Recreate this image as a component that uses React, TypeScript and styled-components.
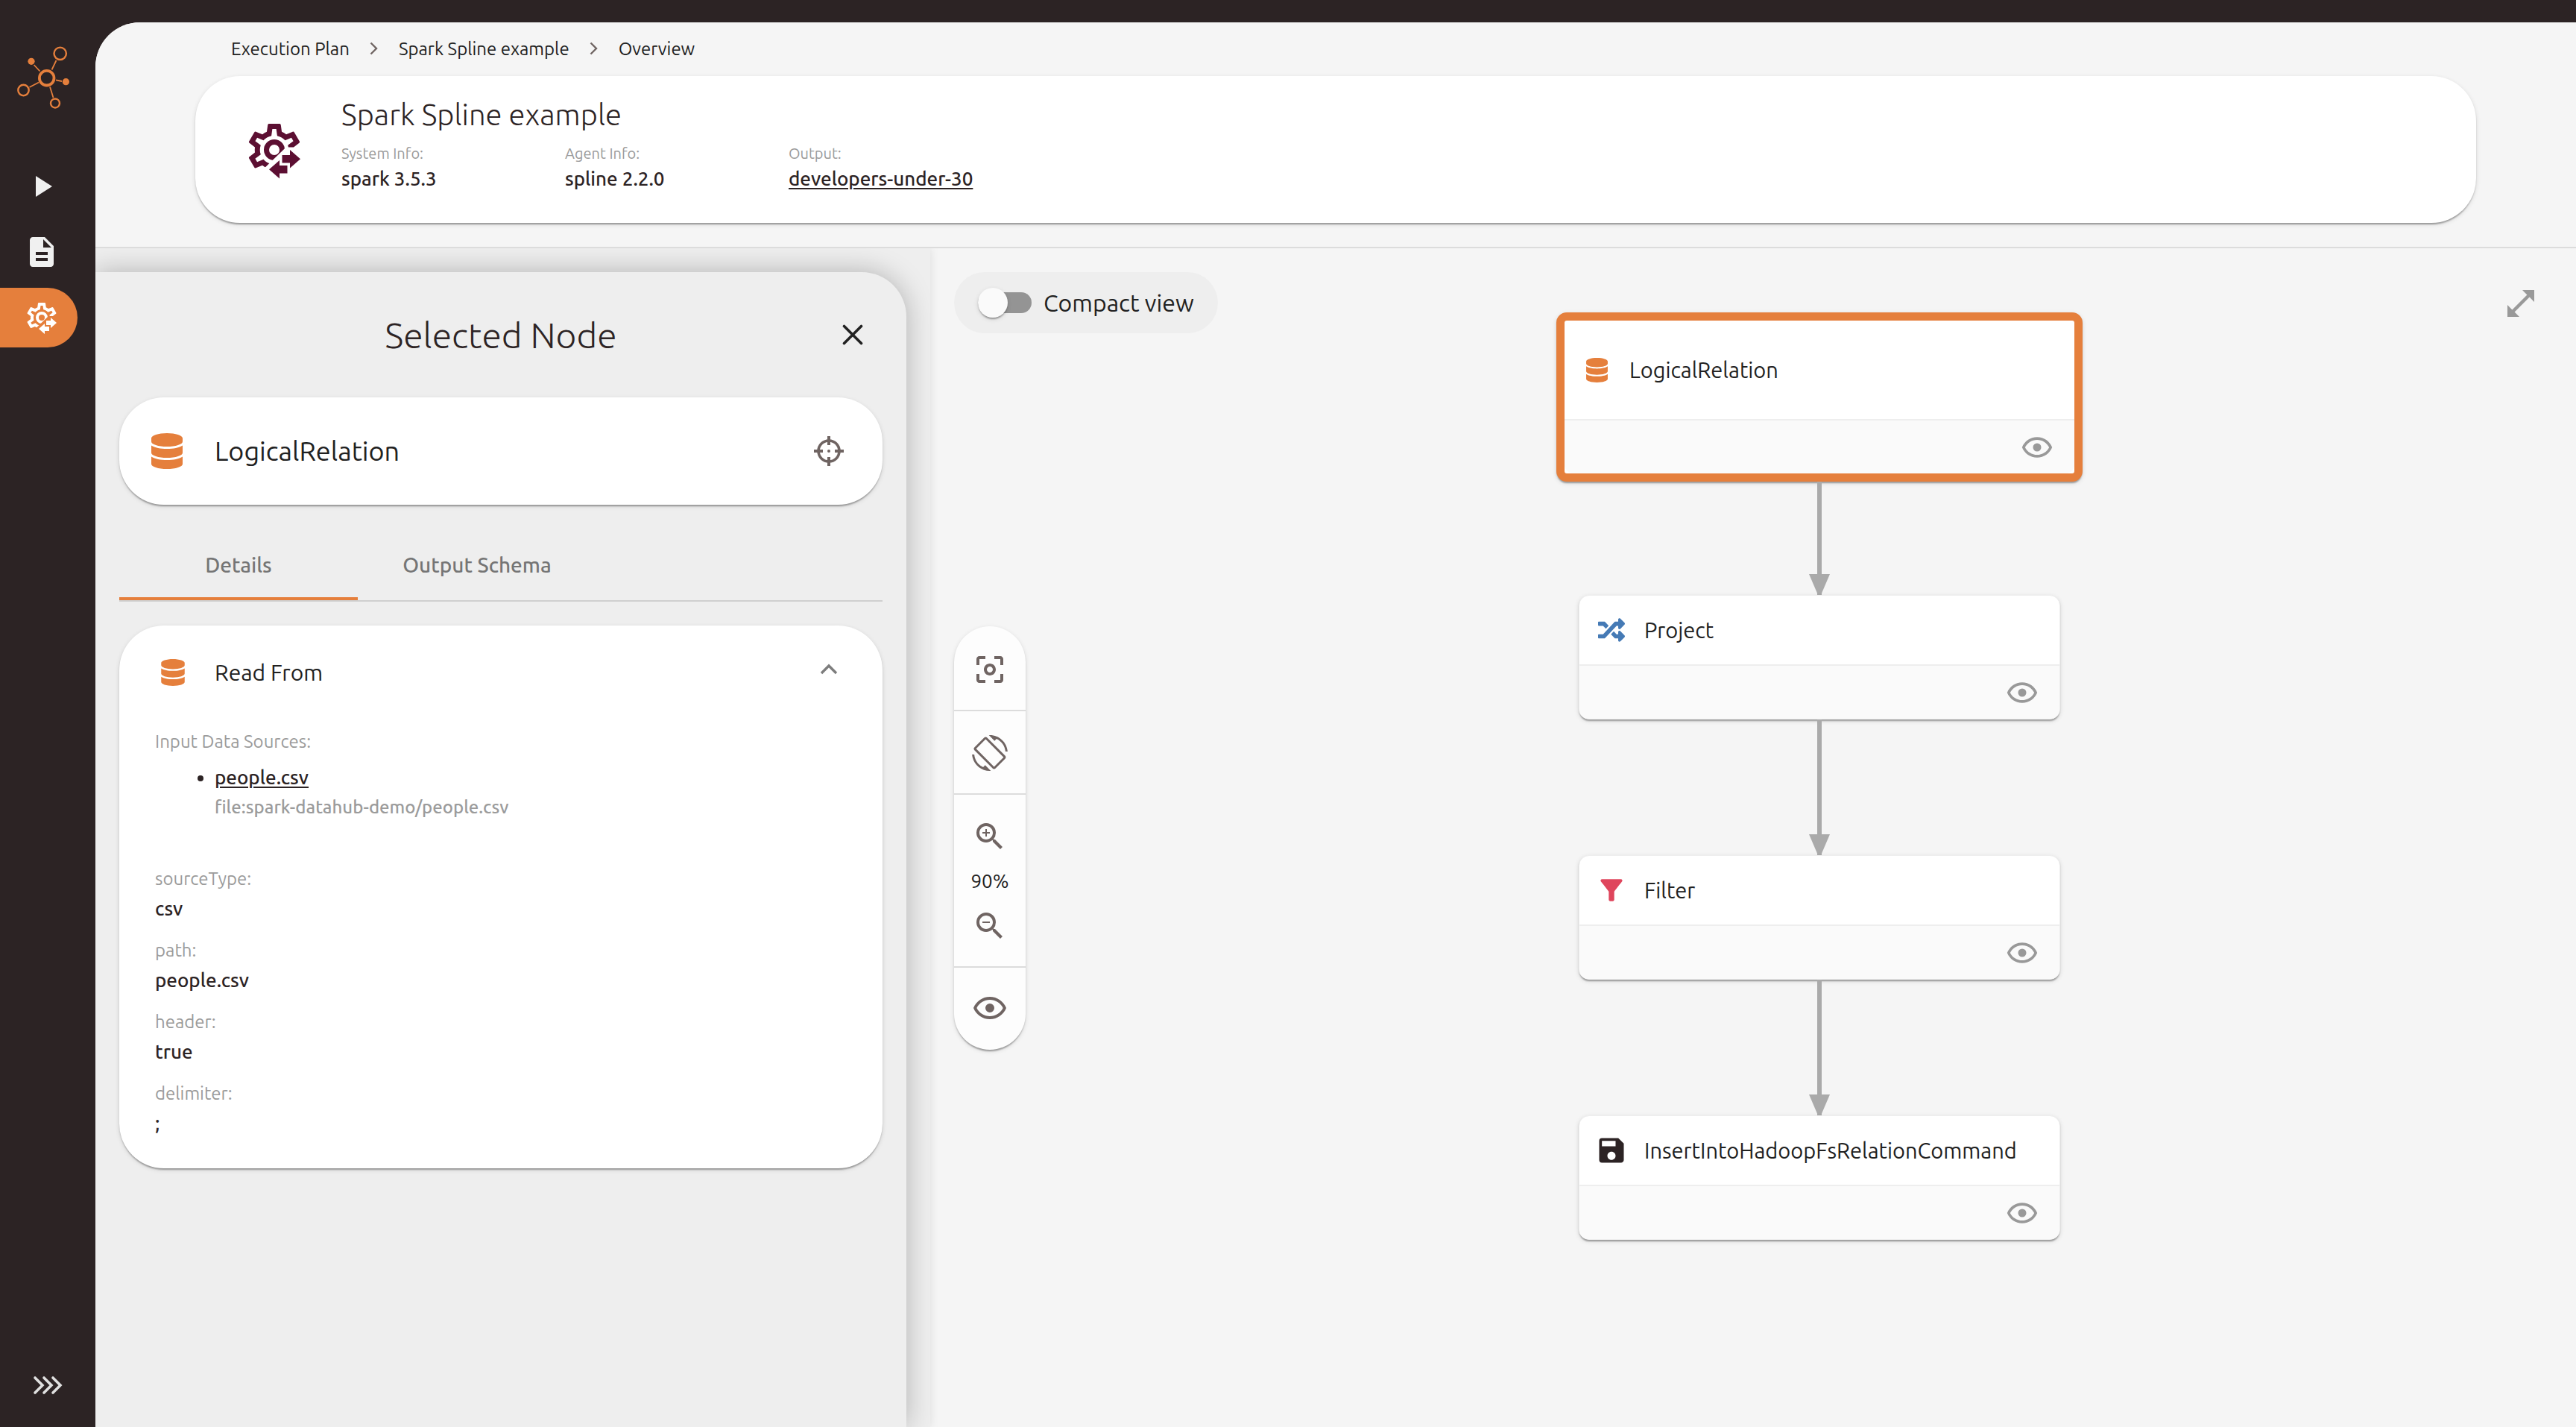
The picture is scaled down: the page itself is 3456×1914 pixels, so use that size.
import React from "react";
import styled, { createGlobalStyle } from "styled-components";
import { FaDatabase, FaRandom } from "react-icons/fa";
import {
  MdCenterFocusWeak,
  MdDescription,
  MdFilterAlt,
  MdPlayArrow,
  MdSave,
  MdScreenRotation,
  MdZoomIn,
  MdZoomOut,
} from "react-icons/md";

const color = {
  dark: "#2c2324",
  text: "#212121",
  muted: "#9b9b9b",
  brown: "#6f6462",
  orange: "#e57f3c",
  wine: "#5c0f32",
  blue: "#457ab5",
  red: "#df455c",
  canvas: "#f5f5f5",
  panel: "#eeeeee",
  line: "#dcdcdc",
  edge: "#aaaaaa",
};

const elevation =
  "0 4px 2px -2px rgba(0,0,0,.2), 0 2px 2px 0 rgba(0,0,0,.14), 0 2px 6px 0 rgba(0,0,0,.12)";

const GlobalStyle = createGlobalStyle`
  *, *::before, *::after { box-sizing: border-box; }
  body {
    margin: 0;
    background: ${color.dark};
    color: ${color.text};
    font-family: Ubuntu, "Noto Sans", sans-serif;
    font-size: 24px;
  }
  h1, h2, h3, p, ul, ol, dl, dd { margin: 0; padding: 0; }
  svg { display: block; flex: none; }
`;

/* ---------- icons ---------- */

const CogTransferIcon = ({ size }: { size: number }) => (
  <svg width={size} height={size} viewBox="0 0 24 24" fill="currentColor" aria-hidden="true">
    <defs>
      <clipPath id="cog-cut">
        <polygon points="0,0 24,0 24,11 16.5,11 8.2,19 6,24 0,24" />
      </clipPath>
    </defs>
    <path
      clipPath="url(#cog-cut)"
      d="M12,8A4,4 0 0,1 16,12A4,4 0 0,1 12,16A4,4 0 0,1 8,12A4,4 0 0,1 12,8M12,10A2,2 0 0,0 10,12A2,2 0 0,0 12,14A2,2 0 0,0 14,12A2,2 0 0,0 12,10M10,22C9.75,22 9.54,21.82 9.5,21.58L9.13,18.93C8.5,18.68 7.96,18.34 7.44,17.94L4.95,18.95C4.73,19.03 4.46,18.95 4.34,18.73L2.34,15.27C2.21,15.05 2.27,14.78 2.46,14.63L4.57,12.97L4.5,12L4.57,11L2.46,9.37C2.27,9.22 2.21,8.95 2.34,8.73L4.34,5.27C4.46,5.05 4.73,4.96 4.95,5.05L7.44,6.05C7.96,5.66 8.5,5.32 9.13,5.07L9.5,2.42C9.54,2.18 9.75,2 10,2H14C14.25,2 14.46,2.18 14.5,2.42L14.87,5.07C15.5,5.32 16.04,5.66 16.56,6.05L19.05,5.05C19.27,4.96 19.54,5.05 19.66,5.27L21.66,8.73C21.79,8.95 21.73,9.22 21.54,9.37L19.43,11L19.5,12L19.43,13L21.54,14.63C21.73,14.78 21.79,15.05 21.66,15.27L19.66,18.73C19.54,18.95 19.27,19.04 19.05,18.95L16.56,17.95C16.04,18.34 15.5,18.68 14.87,18.93L14.5,21.58C14.46,21.82 14.25,22 14,22H10M11.25,4L10.88,6.61C9.68,6.86 8.62,7.5 7.85,8.39L5.44,7.35L4.69,8.65L6.8,10.2C6.4,11.37 6.4,12.64 6.8,13.8L4.68,15.36L5.43,16.66L7.86,15.62C8.63,16.5 9.68,17.14 10.87,17.38L11.24,20H12.76L13.13,17.39C14.32,17.14 15.37,16.5 16.14,15.62L18.57,16.66L19.32,15.36L17.2,13.81C17.6,12.64 17.6,11.37 17.2,10.2L19.31,8.65L18.56,7.35L16.15,8.39C15.38,7.5 14.32,6.86 13.12,6.62L12.75,4H11.25Z"
    />
    <path d="M18,12L22,15.5L18,19V17H15V14H18V12ZM14,16L10,19.5L14,23V21H17V18H14V16Z" />
  </svg>
);

const EyeIcon = ({ size }: { size: number }) => (
  <svg width={size} height={size} viewBox="0 0 24 24" fill="currentColor" aria-hidden="true">
    <path d="M12,9A3,3 0 0,1 15,12A3,3 0 0,1 12,15A3,3 0 0,1 9,12A3,3 0 0,1 12,9M12,4.5C17,4.5 21.27,7.61 23,12C21.27,16.39 17,19.5 12,19.5C7,19.5 2.73,16.39 1,12C2.73,7.61 7,4.5 12,4.5M3.18,12C4.83,15.36 8.24,17.5 12,17.5C15.76,17.5 19.17,15.36 20.82,12C19.17,8.64 15.76,6.5 12,6.5C8.24,6.5 4.83,8.64 3.18,12Z" />
  </svg>
);

const LogoIcon = () => (
  <svg width="72" height="84" viewBox="0 0 72 84" fill="none" stroke={color.orange} aria-hidden="true">
    <circle cx="40.7" cy="42.7" r="9.8" strokeWidth="3.8" />
    <circle cx="58.7" cy="9.8" r="8.2" strokeWidth="2.4" />
    <circle cx="9.5" cy="59" r="7.2" strokeWidth="2.4" />
    <circle cx="52" cy="76.5" r="6" strokeWidth="2.4" />
    <g fill={color.orange} stroke="none">
      <circle cx="20" cy="20.3" r="4.6" />
      <circle cx="66.4" cy="47.7" r="4.6" />
    </g>
    <path strokeWidth="1.8" d="M47.5 31.5 53.5 19M31.5 33.5 23.5 25M53 45.3 61 47M17.5 55 30 48.5M45 54.5 49.5 69" />
  </svg>
);

const ChevronRight = () => (
  <svg width="12" height="18" viewBox="0 0 12 18" fill="none" stroke={color.brown} strokeWidth="2.4" aria-hidden="true">
    <path d="M1.5 1.5 9 9 1.5 16.5" />
  </svg>
);

const TripleChevron = () => (
  <svg width="40" height="26" viewBox="0 0 40 26" fill="none" stroke="#e0e0e0" strokeWidth="3.6" strokeLinecap="round" aria-hidden="true">
    <path d="M3 3 13 13 3 23M15 3 25 13 15 23M27 3 37 13 27 23" />
  </svg>
);

const CloseIcon = () => (
  <svg width="28" height="28" viewBox="0 0 28 28" fill="none" stroke={color.text} strokeWidth="3.6" strokeLinecap="round" aria-hidden="true">
    <path d="M2.5 2.5 25.5 25.5M25.5 2.5 2.5 25.5" />
  </svg>
);

const TargetIcon = () => (
  <svg width="40" height="40" viewBox="0 0 40 40" fill="none" stroke={color.brown} strokeWidth="4" aria-hidden="true">
    <circle cx="20" cy="20" r="14" strokeWidth="3.6" />
    <path d="M20 0V12M20 28V40M0 20H12M28 20H40" />
    <circle cx="20" cy="20" r="2" fill={color.brown} stroke="none" />
  </svg>
);

const CollapseIcon = () => (
  <svg width="24" height="26" viewBox="0 0 24 26" fill="none" stroke="#7d7d7d" strokeWidth="3.4" aria-hidden="true">
    <path d="M2 14 12 4 22 14" />
  </svg>
);

const ExpandIcon = () => (
  <svg width="36" height="36" viewBox="0 0 36 36" fill="#999999" aria-hidden="true">
    <path d="M20 0H36V16L29.6 9.6 9.6 29.6 16 36H0V20L6.4 26.4 26.4 6.4Z" />
  </svg>
);

const EdgeArrow = ({ length }: { length: number }) => (
  <svg width="28" height={length} viewBox={`0 0 28 ${length}`} fill={color.edge} aria-hidden="true">
    <rect x="11" y="0" width="6" height={length} />
    <polygon points={`0,${length - 28} 28,${length - 28} 16,${length} 12,${length}`} />
  </svg>
);

/* ---------- shell ---------- */

const Shell = styled.div`
  display: flex;
  min-height: 100vh;
  padding-top: 30px;
  background: ${color.dark};
`;

const Sidebar = styled.nav`
  flex: 0 0 128px;
  display: flex;
  flex-direction: column;
  padding: 32px 0 24px;
`;

const LogoLink = styled.a`
  display: block;
  margin: 0 0 64px 22px;
`;

const NavList = styled.ul`
  display: flex;
  flex-direction: column;
  gap: 8px;
  list-style: none;
`;

const NavLink = styled.a<{ $active?: boolean }>`
  display: flex;
  align-items: center;
  width: 104px;
  height: 80px;
  padding-left: 32px;
  border-radius: 0 40px 40px 0;
  color: ${(p) => (p.$active ? "#ffffff" : "#f0f0f0")};
  background: ${(p) => (p.$active ? color.orange : "transparent")};
`;

const IconButton = styled.button<{ $size?: number; $tone?: string }>`
  display: flex;
  align-items: center;
  justify-content: center;
  width: ${(p) => p.$size ?? 48}px;
  height: ${(p) => p.$size ?? 48}px;
  padding: 0;
  border: 0;
  background: none;
  color: ${(p) => p.$tone ?? color.brown};
  cursor: pointer;
`;

const SidebarToggle = styled(IconButton)`
  width: 100%;
  margin-top: auto;
`;

const Content = styled.div`
  flex: 1;
  min-width: 0;
  display: flex;
  flex-direction: column;
  overflow: hidden;
  border-top-left-radius: 60px;
  background: ${color.canvas};
`;

/* ---------- header ---------- */

const Header = styled.header`
  position: relative;
  z-index: 1;
  padding: 0 134px 32px;
  border-bottom: 2px solid ${color.line};
  background: ${color.canvas};
`;

const Breadcrumbs = styled.ol`
  display: flex;
  align-items: center;
  height: 72px;
  padding: 0 48px 2px;
  list-style: none;
`;

const Crumb = styled.li`
  display: flex;
  align-items: center;
`;

const CrumbLink = styled.a`
  color: ${color.text};
  text-decoration: none;
`;

const CrumbSeparator = styled.span`
  display: flex;
  justify-content: center;
  width: 66px;
`;

const Card = styled.section`
  border-radius: 60px;
  background: #ffffff;
  box-shadow: ${elevation};
`;

const PlanCard = styled(Card)`
  display: flex;
  align-items: center;
  gap: 48px;
  padding: 0 64px;
  color: ${color.wine};
`;

const PlanInfo = styled.div`
  padding: 26px 0 39px;
  color: ${color.dark};
`;

const PlanTitle = styled.h1`
  margin-bottom: 12px;
  font-size: 40px;
  font-weight: 300;
  line-height: 52px;
`;

const Facts = styled.dl`
  display: flex;
`;

const Fact = styled.div`
  width: 300px;
`;

const FactLabel = styled.dt`
  font-size: 20px;
  line-height: 28px;
  color: ${color.muted};
`;

const FactValue = styled.dd`
  font-size: 26px;
  font-weight: 500;
  line-height: 40px;
`;

const StrongLink = styled.a`
  color: ${color.dark};
  text-decoration-thickness: 2px;
  text-underline-offset: 3px;
`;

/* ---------- selected node ---------- */

const Main = styled.main`
  position: relative;
  z-index: 0;
  flex: 1;
  display: flex;
`;

const SidePane = styled.aside`
  z-index: 0;
  flex: 0 0 1120px;
  display: flex;
  padding: 32px 32px 0 0;
  overflow: hidden;
  background: ${color.panel};
  box-shadow: 0 0 12px rgba(0, 0, 0, 0.1);
`;

const Drawer = styled.div`
  flex: 1;
  padding: 0 32px;
  border-top-right-radius: 60px;
  background: ${color.panel};
  box-shadow: 0 0 36px rgba(0, 0, 0, 0.26);
`;

const DrawerHeader = styled.div`
  display: grid;
  grid-template-columns: 80px 1fr 80px;
  align-items: center;
  height: 168px;
`;

const DrawerTitle = styled.h2`
  grid-column: 2;
  font-size: 48px;
  font-weight: 300;
  text-align: center;
  color: ${color.dark};
`;

const NodeCard = styled(Card)`
  display: flex;
  align-items: center;
  height: 144px;
  padding: 0 48px 0 40px;
  gap: 40px;
`;

const NodeName = styled.h3`
  flex: 1;
  font-size: 36px;
  font-weight: 400;
  line-height: 40px;
`;

const TabList = styled.div`
  display: flex;
  margin: 32px 0;
  border-bottom: 2px solid #cfcfcf;
`;

const Tab = styled.button<{ $active?: boolean }>`
  width: 320px;
  height: 96px;
  padding: 0;
  border: 0;
  background: none;
  box-shadow: ${(p) => (p.$active ? `inset 0 -4px ${color.orange}` : "none")};
  color: #757575;
  font: inherit;
  font-size: 28px;
  font-weight: 500;
  cursor: pointer;
`;

const SectionHeader = styled.div`
  display: flex;
  align-items: center;
  height: 126px;
  padding: 0 48px 0 54px;
  gap: 38px;
`;

const SectionTitle = styled.h3`
  flex: 1;
  font-size: 30px;
  font-weight: 400;
`;

const SectionBody = styled.div`
  padding: 10px 48px 40px;
  line-height: 40px;
`;

const PropLabel = styled.dt`
  color: ${color.muted};
`;

const PropValue = styled.dd`
  color: ${color.dark};
  font-size: 26px;
  font-weight: 500;
`;

const SourceList = styled.ul`
  margin: 8px 0 56px;
  padding-left: 80px;
  color: ${color.dark};
  font-size: 26px;
  font-weight: 500;
`;

const SourcePath = styled.p`
  color: ${color.muted};
  font-size: 24px;
`;

const Props = styled.dl`
  display: flex;
  flex-direction: column;
  gap: 16px;
`;

/* ---------- graph ---------- */

const GraphPane = styled.div`
  position: relative;
  z-index: -1;
  flex: 1;
  min-width: 0;
  padding: 86px 0 86px 178px;
`;

const Graph = styled.div`
  display: flex;
  flex-direction: column;
  align-items: center;
`;

const GraphNode = styled.article<{ $selected?: boolean }>`
  width: ${(p) => (p.$selected ? 706 : 646)}px;
  border: ${(p) => (p.$selected ? `11px solid ${color.orange}` : "1px solid #eeeeee")};
  border-radius: 14px;
  background: #ffffff;
  box-shadow: ${elevation};
`;

const GraphNodeHead = styled.div<{ $selected?: boolean }>`
  display: flex;
  align-items: center;
  gap: 22px;
  height: ${(p) => (p.$selected ? 132 : 92)}px;
  padding: 0 21px;
  font-size: 29px;
`;

const GraphNodeIcon = styled.span<{ $tone: string }>`
  display: flex;
  justify-content: center;
  width: 44px;
  color: ${(p) => p.$tone};
`;

const GraphNodeFoot = styled.div`
  display: flex;
  align-items: center;
  justify-content: flex-end;
  height: 73px;
  padding-right: 28px;
  border-top: 2px solid #eeeeee;
  border-radius: 0 0 12px 12px;
  background: #fafafa;
`;

const TopControls = styled.div`
  position: absolute;
  top: 32px;
  left: 32px;
  right: 32px;
  display: flex;
  justify-content: space-between;
`;

const CompactToggle = styled.label`
  display: flex;
  align-items: center;
  gap: 16px;
  height: 82px;
  padding: 0 32px;
  border-radius: 41px;
  background: ${color.panel};
  font-size: 32px;
`;

const Switch = styled.input`
  appearance: none;
  display: flex;
  align-items: center;
  width: 72px;
  height: 28px;
  margin: 0;
  border-radius: 14px;
  background: #949494;

  &::before {
    content: "";
    width: 40px;
    height: 40px;
    border-radius: 50%;
    background: #fafafa;
    box-shadow: ${elevation};
  }

  &:checked {
    justify-content: flex-end;
    background: ${color.orange};
  }
`;

const ToolDock = styled.div`
  position: absolute;
  top: 0;
  bottom: 0;
  left: 32px;
  display: flex;
  align-items: center;
`;

const Toolbar = styled.div`
  width: 96px;
  border-radius: 48px;
  background: #fdfdfd;
  box-shadow: ${elevation};
`;

const ToolGroup = styled.div`
  display: flex;
  flex-direction: column;
  align-items: center;
  justify-content: center;
  gap: 20px;
  padding: 32px 0 30px;
  font-size: 26px;
  line-height: 32px;

  & + & {
    border-top: 2px solid ${color.line};
  }

  &:first-child {
    padding-top: 34px;
  }

  &:last-child {
    padding: 30px 0 32px;
  }
`;

/* ---------- data ---------- */

type PlanNode = { name: string; tone: string; icon: React.ReactNode; edge?: number };

const planNodes: PlanNode[] = [
  { name: "LogicalRelation", tone: color.orange, icon: <FaDatabase size={33} />, edge: 152 },
  { name: "Project", tone: color.blue, icon: <FaRandom size={36} />, edge: 182 },
  { name: "Filter", tone: color.red, icon: <MdFilterAlt size={44} />, edge: 182 },
  { name: "InsertIntoHadoopFsRelationCommand", tone: color.dark, icon: <MdSave size={44} /> },
];

const properties = [
  ["sourceType", "csv"],
  ["path", "people.csv"],
  ["header", "true"],
  ["delimiter", ";"],
];

const crumbs = ["Execution Plan", "Spark Spline example", "Overview"];

/* ---------- page ---------- */

export default function App() {
  const [selected, setSelected] = React.useState("LogicalRelation");
  const [tab, setTab] = React.useState("Details");

  return (
    <Shell>
      <GlobalStyle />
      <Sidebar aria-label="Main">
        <LogoLink href="#" aria-label="Home">
          <LogoIcon />
        </LogoLink>
        <NavList>
          <li>
            <NavLink href="#events" aria-label="Execution events">
              <MdPlayArrow size={48} />
            </NavLink>
          </li>
          <li>
            <NavLink href="#sources" aria-label="Data sources">
              <MdDescription size={48} />
            </NavLink>
          </li>
          <li>
            <NavLink href="#plans" aria-label="Execution plans" $active>
              <CogTransferIcon size={48} />
            </NavLink>
          </li>
        </NavList>
        <SidebarToggle $size={64} aria-label="Expand menu">
          <TripleChevron />
        </SidebarToggle>
      </Sidebar>

      <Content>
        <Header>
          <Breadcrumbs>
            {crumbs.map((crumb, i) => (
              <Crumb key={crumb}>
                {i > 0 && (
                  <CrumbSeparator>
                    <ChevronRight />
                  </CrumbSeparator>
                )}
                <CrumbLink href="#">{crumb}</CrumbLink>
              </Crumb>
            ))}
          </Breadcrumbs>
          <PlanCard>
            <CogTransferIcon size={84} />
            <PlanInfo>
              <PlanTitle>Spark Spline example</PlanTitle>
              <Facts>
                <Fact>
                  <FactLabel>System Info:</FactLabel>
                  <FactValue>spark 3.5.3</FactValue>
                </Fact>
                <Fact>
                  <FactLabel>Agent Info:</FactLabel>
                  <FactValue>spline 2.2.0</FactValue>
                </Fact>
                <Fact>
                  <FactLabel>Output:</FactLabel>
                  <FactValue>
                    <StrongLink href="#output">developers-under-30</StrongLink>
                  </FactValue>
                </Fact>
              </Facts>
            </PlanInfo>
          </PlanCard>
        </Header>

        <Main>
          <SidePane>
            <Drawer>
              <DrawerHeader>
                <DrawerTitle>Selected Node</DrawerTitle>
                <IconButton $size={80} aria-label="Close">
                  <CloseIcon />
                </IconButton>
              </DrawerHeader>

              <NodeCard>
                <FaDatabase size={48} color={color.orange} />
                <NodeName>LogicalRelation</NodeName>
                <IconButton aria-label="Focus node">
                  <TargetIcon />
                </IconButton>
              </NodeCard>

              <TabList role="tablist">
                {["Details", "Output Schema"].map((name) => (
                  <Tab
                    key={name}
                    role="tab"
                    aria-selected={tab === name}
                    $active={tab === name}
                    onClick={() => setTab(name)}
                  >
                    {name}
                  </Tab>
                ))}
              </TabList>

              <Card>
                <SectionHeader>
                  <FaDatabase size={36} color={color.orange} />
                  <SectionTitle>Read From</SectionTitle>
                  <IconButton aria-label="Collapse section">
                    <CollapseIcon />
                  </IconButton>
                </SectionHeader>
                <SectionBody>
                  <dl>
                    <PropLabel>Input Data Sources:</PropLabel>
                    <dd>
                      <SourceList>
                        <li>
                          <StrongLink href="#people">people.csv</StrongLink>
                          <SourcePath>file:spark-datahub-demo/people.csv</SourcePath>
                        </li>
                      </SourceList>
                    </dd>
                  </dl>
                  <Props>
                    {properties.map(([label, value]) => (
                      <div key={label}>
                        <PropLabel>{label}:</PropLabel>
                        <PropValue>{value}</PropValue>
                      </div>
                    ))}
                  </Props>
                </SectionBody>
              </Card>
            </Drawer>
          </SidePane>

          <GraphPane>
            <Graph>
              {planNodes.map((node) => (
                <React.Fragment key={node.name}>
                  <GraphNode $selected={node.name === selected} onClick={() => setSelected(node.name)}>
                    <GraphNodeHead $selected={node.name === selected}>
                      <GraphNodeIcon $tone={node.tone}>{node.icon}</GraphNodeIcon>
                      {node.name}
                    </GraphNodeHead>
                    <GraphNodeFoot>
                      <IconButton $size={44} $tone="#999999" aria-label={`Highlight ${node.name}`}>
                        <EyeIcon size={44} />
                      </IconButton>
                    </GraphNodeFoot>
                  </GraphNode>
                  {node.edge && <EdgeArrow length={node.edge} />}
                </React.Fragment>
              ))}
            </Graph>

            <ToolDock>
              <Toolbar role="toolbar" aria-label="Graph view">
                <ToolGroup>
                  <IconButton aria-label="Fit to view">
                    <MdCenterFocusWeak size={48} />
                  </IconButton>
                </ToolGroup>
                <ToolGroup>
                  <IconButton aria-label="Rotate layout">
                    <MdScreenRotation size={48} />
                  </IconButton>
                </ToolGroup>
                <ToolGroup>
                  <IconButton aria-label="Zoom in">
                    <MdZoomIn size={48} />
                  </IconButton>
                  <span>90%</span>
                  <IconButton aria-label="Zoom out">
                    <MdZoomOut size={48} />
                  </IconButton>
                </ToolGroup>
                <ToolGroup>
                  <IconButton aria-label="Highlight lineage">
                    <EyeIcon size={48} />
                  </IconButton>
                </ToolGroup>
              </Toolbar>
            </ToolDock>

            <TopControls>
              <CompactToggle>
                <Switch type="checkbox" />
                Compact view
              </CompactToggle>
              <IconButton $size={84} aria-label="Full screen">
                <ExpandIcon />
              </IconButton>
            </TopControls>
          </GraphPane>
        </Main>
      </Content>
    </Shell>
  );
}
